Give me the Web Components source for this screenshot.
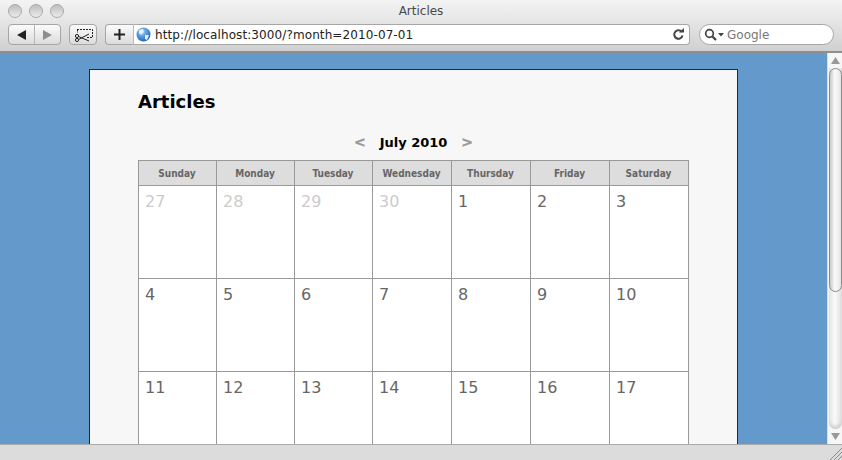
<!DOCTYPE html>
<html>
<head>
<meta charset="utf-8">
<title>Articles</title>
<style>
    html, body { margin: 0; height: 100%; overflow: hidden; }
    body { font-family: "DejaVu Sans", sans-serif; }
</style>
</head>
<body>
<browser-window>
    <articles-page>
        <month-calendar month="July 2010"></month-calendar>
    </articles-page>
</browser-window>

<script>
class BrowserWindow extends HTMLElement {
    constructor() {
        super();
        this.attachShadow({ mode: "open" });
        this.shadowRoot.innerHTML = `
            <style>
                :host { display: flex; flex-direction: column; width: 842px; height: 460px; overflow: hidden; }
                .chrome {
                    box-sizing: border-box;
                    flex: none;
                    background: linear-gradient(#f4f4f4, #e6e6e6 40%, #d0d0d0);
                    border-bottom: 2px solid #8f8f8f;
                    height: 53px;
                }
                .title {
                    display: flex; align-items: center; height: 22px; position: relative;
                    font: 12px "DejaVu Sans", sans-serif; color: #4a4a4a;
                    justify-content: center;
                }
                .lights { position: absolute; left: 8px; top: 4px; display: flex; gap: 7px; }
                .lights i {
                    width: 14px; height: 14px; border-radius: 50%; box-sizing: border-box;
                    border: 1px solid #a9a9a9;
                    background: linear-gradient(#bdbdbd, #ececec);
                }
                .tools { display: flex; align-items: center; height: 21px; margin-top: 2px; padding: 0 8px; }
                .btn {
                    display: flex; align-items: center; justify-content: center;
                    height: 21px; box-sizing: border-box;
                    border: 1px solid #a6a6a6; border-radius: 4px;
                    background: linear-gradient(#fbfbfb, #dcdcdc);
                }
                .nav { width: 53px; padding: 0; overflow: hidden; }
                .nav span { flex: 1; height: 100%; display: flex; align-items: center; justify-content: center; }
                .nav span + span { border-left: 1px solid #b5b5b5; }
                .cut { width: 28px; margin-left: 8px; }
                .plus { width: 28px; margin-left: 8px; border-radius: 4px 0 0 4px; border-right: 0; }
                .url {
                    width: 557px; height: 21px; box-sizing: border-box; background: #fff;
                    border: 1px solid #a6a6a6; border-left-color: #bbb; border-radius: 0 4px 4px 0;
                    display: flex; align-items: center; padding: 0 5px 0 2px; gap: 4px;
                    font: 12px "DejaVu Sans", sans-serif; color: #222;
                }
                .url span { flex: 1; white-space: nowrap; letter-spacing: .1px; padding-top: 1px; }
                .search {
                    width: 135px; height: 21px; margin-left: 9px; box-sizing: border-box; background: #fff;
                    border: 1px solid #a6a6a6; border-radius: 11px;
                    display: flex; align-items: center; padding-left: 4px; gap: 3px;
                    font: 12px "DejaVu Sans", sans-serif; color: #777;
                }
                .search span { padding-top: 1px; }
                .view { flex: 1; display: flex; min-height: 0; }
                .page { flex: 1; min-width: 0; overflow: hidden; background: #6499cc; }
                .scroll {
                    width: 15px; flex: none; box-sizing: border-box; background: #f6f6f6;
                    border-left: 1px solid #dcdcdc;
                    display: flex; flex-direction: column; align-items: center;
                }
                .arrow { height: 15px; flex: none; display: flex; align-items: center; justify-content: center; }
                .track {
                    flex: 1; width: 13px; box-sizing: border-box;
                    border-radius: 0 0 7px 7px;
                    background: linear-gradient(90deg, #e4e4e4, #fafafa 45%, #dedede);
                    box-shadow: inset 0 -4px 4px -2px #c4c4c4;
                }
                .thumb {
                    height: 224px; box-sizing: border-box;
                    border: 1px solid #8c8c8c; border-radius: 7px;
                    background: linear-gradient(90deg, #c9c9c9, #fbfbfb 45%, #e3e3e3);
                }
                .status {
                    height: 16px; flex: none; box-sizing: border-box; background: #dcdcdc;
                    border-top: 1px solid #a9a9a9;
                    display: flex; justify-content: flex-end; align-items: flex-end;
                }
            </style>
            <div class="chrome">
                <div class="title">
                    <div class="lights"><i></i><i></i><i></i></div>
                    Articles
                </div>
                <div class="tools">
                    <div class="btn nav">
                        <span><svg width="11" height="10"><path d="M1 5 10 0V10Z" fill="#222"/></svg></span>
                        <span><svg width="11" height="10"><path d="M10 5 1 0V10Z" fill="#8e8e8e"/></svg></span>
                    </div>
                    <div class="btn cut">
                        <svg width="19" height="14" fill="none" stroke="#222">
                            <path d="M3 1.500H18.500V9.500H13M3.500 1.500V5" stroke-dasharray="2 1"/>
                            <circle cx="3" cy="8" r="1.600"/><circle cx="3" cy="12" r="1.600"/>
                            <path d="M4.500 8.500 15 13M4.500 11.500 15 6"/>
                        </svg>
                    </div>
                    <div class="btn plus">
                        <svg width="11" height="11"><path d="M5.500 0V11M0 5.500H11" stroke="#222" stroke-width="2"/></svg>
                    </div>
                    <div class="url">
                        <svg width="15" height="15" viewBox="0 0 15 15">
                            <defs><radialGradient id="g" cx=".4" cy=".3" r=".8"><stop offset="0" stop-color="#9cd0fa"/><stop offset="1" stop-color="#0d55b5"/></radialGradient></defs>
                            <circle cx="7.500" cy="7.500" r="7" fill="url(#g)"/>
                            <path d="M3 3 7 2 8 5 5 8 3 6ZM9 8 13 8 11 13 9 12Z" fill="#e8eef5"/>
                        </svg>
                        <span>http://localhost:3000/?month=2010-07-01</span>
                        <svg width="12" height="13" fill="none" stroke="#444" stroke-width="2"><path d="M9.800 4A4.200 4.200 0 1 0 10.500 7.500"/><path d="M7 4.500H12V0Z" fill="#444" stroke="none"/></svg>
                    </div>
                    <div class="search">
                        <svg width="20" height="13" fill="none" stroke="#444"><circle cx="5.500" cy="5.500" r="3.800" stroke-width="1.700"/><path d="M8.500 8.500 12 12" stroke-width="2.200"/><path d="M14 5H20L17 8.500Z" fill="#444" stroke="none"/></svg>
                        <span>Google</span>
                    </div>
                </div>
            </div>
            <div class="view">
                <div class="page"><slot></slot></div>
                <div class="scroll">
                    <div class="arrow"><svg width="9" height="7"><path d="M4.500 0 9 7H0Z" fill="#999"/></svg></div>
                    <div class="track"><div class="thumb"></div></div>
                    <div class="arrow"><svg width="9" height="7"><path d="M4.500 7 9 0H0Z" fill="#999"/></svg></div>
                </div>
            </div>
            <div class="status">
                <svg width="15" height="15" stroke="#8a8a8a"><path d="M3 15 15 3M7 15 15 7M11 15 15 11"/></svg>
            </div>
        `;
    }
}

class ArticlesPage extends HTMLElement {
    constructor() {
        super();
        this.attachShadow({ mode: "open" });
        this.shadowRoot.innerHTML = `
            <style>
                :host {
                    display: block;
                    width: 649px;
                    box-sizing: border-box;
                    margin: 16px 0 0 89px;
                    padding: 21px 48px 0;
                    background: #f7f7f7;
                    border: 1px solid #1d2b3a;
                    height: 500px;
                    font-family: "DejaVu Sans", sans-serif;
                }
                h1 { margin: 0 0 18px; font-size: 18px; line-height: 22px; font-weight: bold; color: #000; }
            </style>
            <h1>Articles</h1>
            <slot></slot>
        `;
    }
}

class MonthCalendar extends HTMLElement {
    constructor() {
        super();
        this.attachShadow({ mode: "open" });
    }

    connectedCallback() {
        const names = ["Sunday", "Monday", "Tuesday", "Wednesday", "Thursday", "Friday", "Saturday"];
        const days = [27, 28, 29, 30, 1, 2, 3, 4, 5, 6, 7, 8, 9, 10, 11, 12, 13, 14, 15, 16, 17];
        this.shadowRoot.innerHTML = `
            <style>
                :host { display: block; width: 551px; }
                .head {
                    display: flex; justify-content: center; align-items: center; gap: 14px;
                    height: 22px; margin-bottom: 7px;
                    font-size: 13px; font-weight: bold; color: #000;
                }
                .head a { color: #999; font-size: 14px; -webkit-text-stroke: .4px #999; }
                .grid {
                    display: grid;
                    grid-template-columns: 78px 78px 78px 79px 79px 79px 79px;
                    grid-auto-rows: 93px;
                    grid-template-rows: 25px;
                    border-top: 1px solid #999; border-left: 1px solid #999;
                    width: 551px; box-sizing: border-box;
                }
                .grid > div { border-right: 1px solid #999; border-bottom: 1px solid #999; box-sizing: border-box; }
                .name {
                    background: #dddddd; color: #666; font: bold 10px "DejaVu Sans Condensed", "DejaVu Sans", sans-serif;
                    display: flex; align-items: center; justify-content: center; padding-right: 1px;
                }
                .day { background: #fff; color: #666; font-size: 16px; line-height: 20px; padding: 6px 0 0 6px; }
                .day.other { color: #ccc; }
            </style>
            <div class="head"><a>&lt;</a><span>${this.getAttribute("month")}</span><a>&gt;</a></div>
            <div class="grid">
                ${names.map(n => `<div class="name">${n}</div>`).join("")}
                ${days.map((d, i) => `<div class="day${i < 4 ? " other" : ""}">${d}</div>`).join("")}
            </div>
        `;
    }
}

customElements.define("browser-window", BrowserWindow);
customElements.define("articles-page", ArticlesPage);
customElements.define("month-calendar", MonthCalendar);
</script>
</body>
</html>
